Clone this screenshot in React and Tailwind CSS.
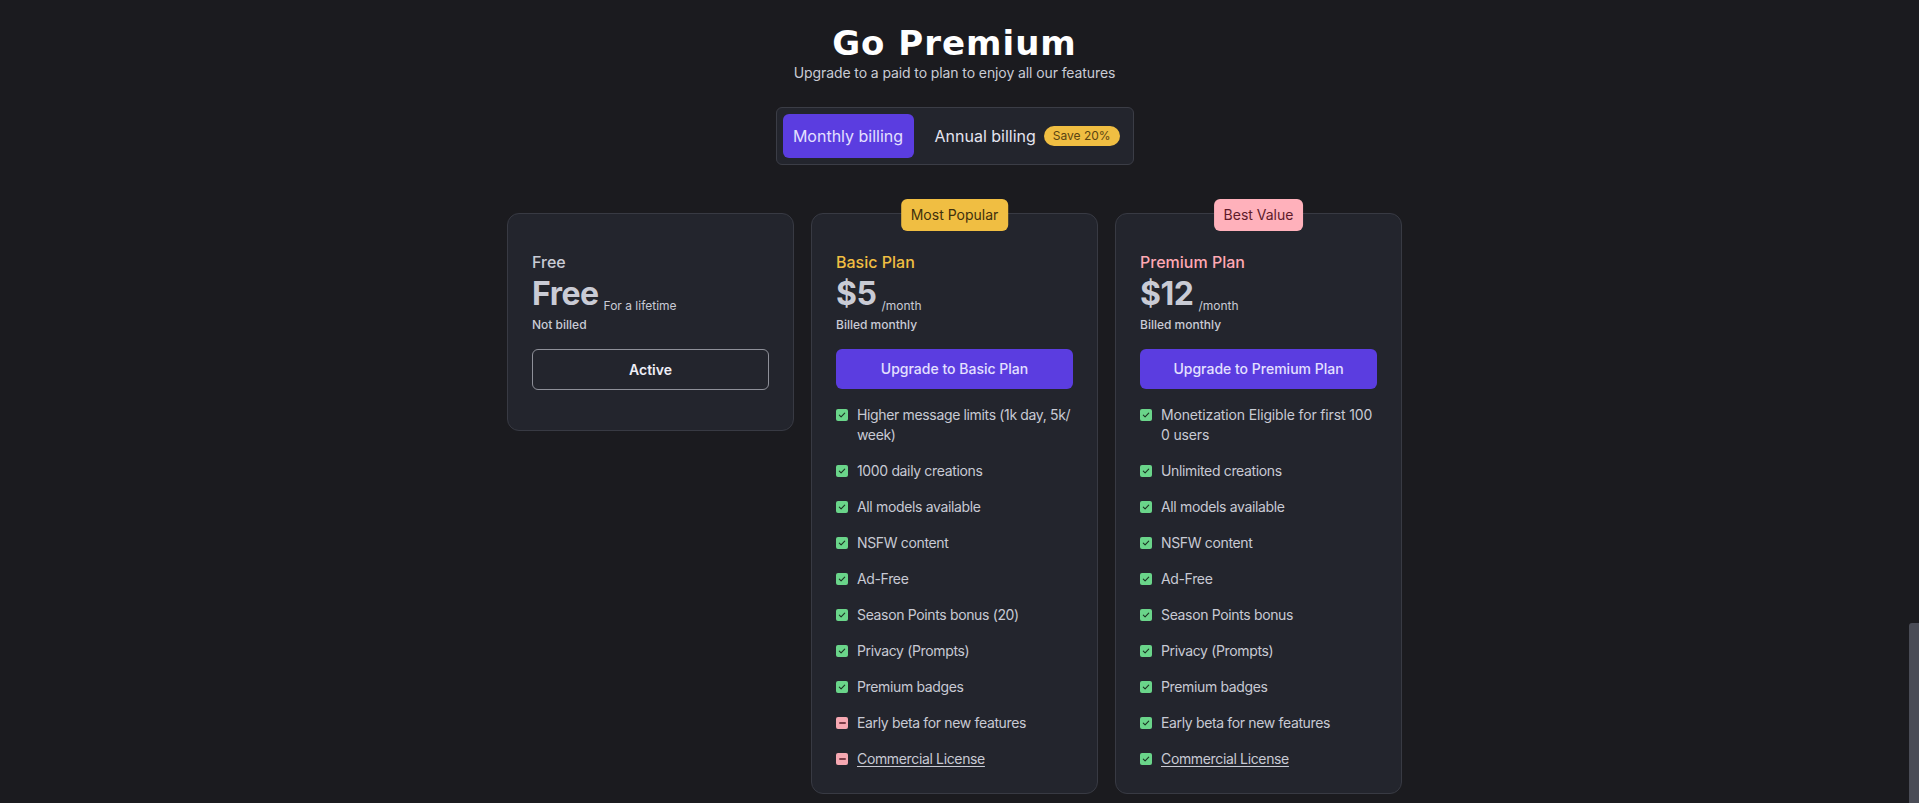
import React from 'react';

// Pricing page: heading, billing toggle, three plan cards.
const FONT = { fontFamily: 'Inter, "Noto Sans", sans-serif' };

const BASIC = [
  { t: 'Higher message limits (1k day, 5k/ week)', ok: true },
  { t: '1000 daily creations', ok: true },
  { t: 'All models available', ok: true },
  { t: 'NSFW content', ok: true },
  { t: 'Ad-Free', ok: true },
  { t: 'Season Points bonus (20)', ok: true },
  { t: 'Privacy (Prompts)', ok: true },
  { t: 'Premium badges', ok: true },
  { t: 'Early beta for new features', ok: false },
  { t: 'Commercial License', ok: false, link: true },
];

const PREMIUM = [
  { t: 'Monetization Eligible for first 1000 users', ok: true, split: true },
  { t: 'Unlimited creations', ok: true },
  { t: 'All models available', ok: true },
  { t: 'NSFW content', ok: true },
  { t: 'Ad-Free', ok: true },
  { t: 'Season Points bonus', ok: true },
  { t: 'Privacy (Prompts)', ok: true },
  { t: 'Premium badges', ok: true },
  { t: 'Early beta for new features', ok: true },
  { t: 'Commercial License', ok: true, link: true },
];

function Mark({ ok }) {
  if (ok) {
    return (
      <span className="mt-[4px] flex h-3 w-3 shrink-0 items-center justify-center rounded-[2px] bg-[#6ad58a]">
        <svg width="8" height="8" viewBox="0 0 8 8" fill="none">
          <path d="M1.3 4.2 3.1 5.9 6.7 2.1" stroke="#1d3524" strokeWidth="1.1" strokeLinecap="round" strokeLinejoin="round" />
        </svg>
      </span>
    );
  }
  return (
    <span className="mt-[4px] flex h-3 w-3 shrink-0 items-center justify-center rounded-[2px] bg-[#f6a8b2]">
      <span className="h-[2px] w-[7px] rounded-full bg-[#7c3d48]" />
    </span>
  );
}

function Features({ items }) {
  return (
    <ul className="mt-4 flex flex-col gap-4">
      {items.map((f) => (
        <li
          key={f.t}
          className={`flex items-start gap-[9px] text-sm leading-5 text-[#c8cad4] ${
            f.split ? 'tracking-[-0.15px]' : 'tracking-[-0.35px]'
          }`}
        >
          <Mark ok={f.ok} />
          <span className={f.link ? 'underline underline-offset-2' : f.split ? 'break-all' : ''}>{f.t}</span>
        </li>
      ))}
    </ul>
  );
}

function Card({ badge, badgeCls, label, labelCls, price, unit, billed, children }) {
  return (
    <div className="relative w-[287px] rounded-xl border border-[#383a43] bg-[#23252d] px-6 pt-[36px] pb-6">
      {badge && (
        <div
          className={`absolute -top-[15px] left-1/2 flex h-8 -translate-x-1/2 items-center rounded-md px-[10px] text-sm ${badgeCls}`}
        >
          {badge}
        </div>
      )}
      <div className={`text-base leading-6 font-medium ${labelCls}`}>{label}</div>
      <div className="flex items-end">
        <span className="text-[32px] leading-[40px] font-bold tracking-[-0.5px] text-[#c9cbd5]">{price}</span>
        <span className="ml-[5px] text-xs leading-4 text-[#c9cbd5]">{unit}</span>
      </div>
      <div className="mt-[3px] text-xs leading-4 font-medium text-[#c9cbd5]">{billed}</div>
      {children}
    </div>
  );
}

export default function App() {
  return (
    <div className="flex h-[803px] w-full overflow-hidden bg-[#1b1b1f]" style={FONT}>
      <main className="flex flex-1 flex-col items-center">
        <h1
          className="mt-[23px] text-[34px] leading-[40px] font-bold tracking-[1px] text-white"
          style={{ fontFamily: '"DejaVu Sans", sans-serif' }}
        >
          Go Premium
        </h1>
        <p className="text-sm leading-5 tracking-[-0.1px] text-[#c9cbd5]">Upgrade to a paid to plan to enjoy all our features</p>

        <div className="mt-6 flex h-[58px] w-[358px] items-center rounded-md border border-[#3b3d46] bg-[#23252d] p-[6px]">
          <button className="h-[44px] w-[131px] rounded-md bg-[#5b3de0] text-base text-[#e4e0ff]">Monthly billing</button>
          <button className="flex h-[44px] flex-1 items-center gap-2 pl-[21px] text-base text-[#e4e4f0]">
            Annual billing
            <span className="flex h-5 items-center rounded-full bg-[#f0be42] px-[9px] text-xs text-[#5a4411]">Save 20%</span>
          </button>
        </div>

        <div className="mt-12 flex items-start gap-[17px]">
          <Card label="Free" labelCls="text-[#c9cbd5]" price="Free" unit="For a lifetime" billed="Not billed">
            <button className="mt-4 h-[41px] w-full rounded-md border border-[#8e9099] text-sm font-semibold text-[#eeeef6]">
              Active
            </button>
            <div className="mt-4" />
          </Card>
          <Card
            badge="Most Popular"
            badgeCls="bg-[#f0be42] text-[#3f300c]"
            label="Basic Plan"
            labelCls="text-[#f0be42]"
            price="$5"
            unit="/month"
            billed="Billed monthly"
          >
            <button className="mt-4 h-10 w-full rounded-md bg-[#5b3de0] text-sm font-medium text-[#e4e0ff]">
              Upgrade to Basic Plan
            </button>
            <Features items={BASIC} />
          </Card>
          <Card
            badge="Best Value"
            badgeCls="bg-[#ffb1bb] text-[#5e1a2a]"
            label="Premium Plan"
            labelCls="text-[#ffa8b3]"
            price="$12"
            unit="/month"
            billed="Billed monthly"
          >
            <button className="mt-4 h-10 w-full rounded-md bg-[#5b3de0] text-sm font-medium text-[#e4e0ff]">
              Upgrade to Premium Plan
            </button>
            <Features items={PREMIUM} />
          </Card>
        </div>
      </main>

      {/* page scrollbar */}
      <div className="flex w-[10px] flex-col">
        <div className="h-[623px]" />
        <div className="flex-1 rounded-tl-[3px] bg-[#4a4c56]" />
      </div>
    </div>
  );
}
